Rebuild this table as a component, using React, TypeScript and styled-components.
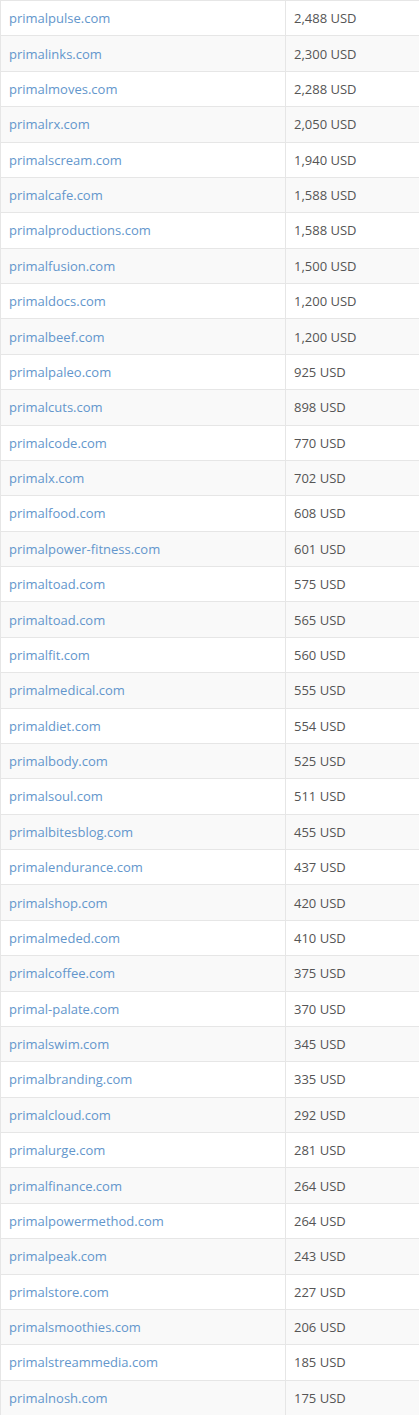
import styled, { createGlobalStyle } from "styled-components";

const GlobalStyle = createGlobalStyle`
  html, body {
    margin: 0;
    padding: 0;
    background: #ffffff;
  }
  body {
    font-family: "Open Sans", "Liberation Sans", sans-serif;
  }
`;

const Table = styled.table`
  width: 100%;
  border-collapse: collapse;
  font-size: 13px;
  color: #555;
`;

const Row = styled.tr<{ $striped: boolean }>`
  background: ${(p) => (p.$striped ? "#f9f9f9" : "#ffffff")};
`;

const Cell = styled.td<{ $narrow?: boolean }>`
  height: 35.375px;
  box-sizing: border-box;
  padding: 0 8px;
  vertical-align: middle;
  border: 1px solid #e6e6e6;
  border-right: ${(p) => (p.$narrow ? "none" : "1px solid #e6e6e6")};
  width: ${(p) => (p.$narrow ? "auto" : "285px")};
  line-height: 18px;
`;

const DomainLink = styled.a`
  color: #6396cc;
  text-decoration: none;
`;

const domains: [string, string][] = [
  ["primalpulse.com", "2,488 USD"],
  ["primalinks.com", "2,300 USD"],
  ["primalmoves.com", "2,288 USD"],
  ["primalrx.com", "2,050 USD"],
  ["primalscream.com", "1,940 USD"],
  ["primalcafe.com", "1,588 USD"],
  ["primalproductions.com", "1,588 USD"],
  ["primalfusion.com", "1,500 USD"],
  ["primaldocs.com", "1,200 USD"],
  ["primalbeef.com", "1,200 USD"],
  ["primalpaleo.com", "925 USD"],
  ["primalcuts.com", "898 USD"],
  ["primalcode.com", "770 USD"],
  ["primalx.com", "702 USD"],
  ["primalfood.com", "608 USD"],
  ["primalpower-fitness.com", "601 USD"],
  ["primaltoad.com", "575 USD"],
  ["primaltoad.com", "565 USD"],
  ["primalfit.com", "560 USD"],
  ["primalmedical.com", "555 USD"],
  ["primaldiet.com", "554 USD"],
  ["primalbody.com", "525 USD"],
  ["primalsoul.com", "511 USD"],
  ["primalbitesblog.com", "455 USD"],
  ["primalendurance.com", "437 USD"],
  ["primalshop.com", "420 USD"],
  ["primalmeded.com", "410 USD"],
  ["primalcoffee.com", "375 USD"],
  ["primal-palate.com", "370 USD"],
  ["primalswim.com", "345 USD"],
  ["primalbranding.com", "335 USD"],
  ["primalcloud.com", "292 USD"],
  ["primalurge.com", "281 USD"],
  ["primalfinance.com", "264 USD"],
  ["primalpowermethod.com", "264 USD"],
  ["primalpeak.com", "243 USD"],
  ["primalstore.com", "227 USD"],
  ["primalsmoothies.com", "206 USD"],
  ["primalstreammedia.com", "185 USD"],
  ["primalnosh.com", "175 USD"],
];

function App() {
  return (
    <>
      <GlobalStyle />
      <Table>
        <tbody>
          {domains.map(([name, price], i) => (
            <Row key={i} $striped={i % 2 === 1}>
              <Cell>
                <DomainLink href="#">{name}</DomainLink>
              </Cell>
              <Cell $narrow>{price}</Cell>
            </Row>
          ))}
        </tbody>
      </Table>
    </>
  );
}

export default App;
